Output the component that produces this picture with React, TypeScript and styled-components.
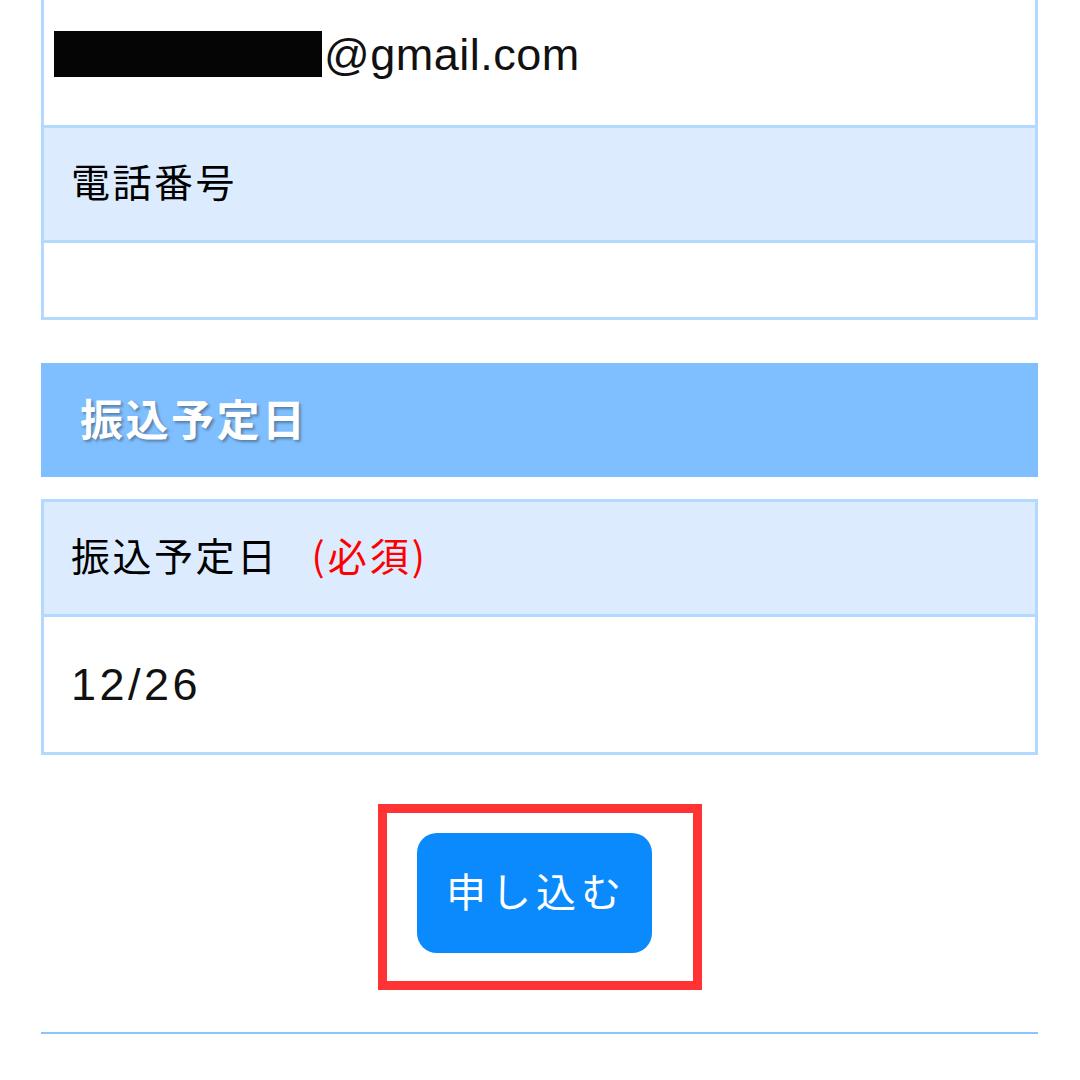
import React from "react";
import styled, { createGlobalStyle } from "styled-components";

const Global = createGlobalStyle`
  html, body { margin: 0; padding: 0; background: #ffffff; }
  body {
    font-family: "Noto Sans CJK JP", "Noto Sans", sans-serif;
    color: #000;
    overflow: hidden;
  }
`;

const Page = styled.div`
  width: 1080px;
  height: 1080px;
  box-sizing: border-box;
  padding: 0 42px 0 41px;
  display: flex;
  flex-direction: column;
  overflow: hidden;
`;

const FormTable = styled.div<{ $offset?: number; $gapTop?: number }>`
  display: flex;
  flex-direction: column;
  border: 3px solid #b3d9ff;
  margin-top: ${(p) => (p.$offset ? `${p.$offset}px` : p.$gapTop ? `${p.$gapTop}px` : "0")};
`;

const Row = styled.div<{ $label?: boolean; $h: number; $first?: boolean; $pb?: number }>`
  height: ${(p) => p.$h}px;
  box-sizing: border-box;
  display: flex;
  align-items: center;
  padding: 0 0 ${(p) => (p.$pb ?? 8)}px 27px;
  background: ${(p) => (p.$label ? "#dcecfe" : "#ffffff")};
  border-top: ${(p) => (p.$first ? "none" : "3px solid #b3d9ff")};
  font-size: 39px;
  letter-spacing: 2.5px;
  line-height: 1;
`;

const LatinValue = styled.span<{ $spacing: number }>`
  font-family: "Liberation Sans", Arial, sans-serif;
  font-size: 45px;
  letter-spacing: ${(p) => p.$spacing}px;
  color: #111;
  line-height: 1;
  display: inline-flex;
  align-items: center;
`;

const Redacted = styled.span`
  display: inline-block;
  width: 268px;
  height: 46px;
  background: #050505;
  margin-left: -17px;
  margin-right: 2px;
`;

const Required = styled.span`
  color: #ff0000;
  margin-left: 33px;
  letter-spacing: 3px;
`;

const SectionHeader = styled.div`
  margin-top: 43px;
  height: 114px;
  box-sizing: border-box;
  background: #80bfff;
  display: flex;
  align-items: center;
  padding: 0 0 6px 39px;
  color: #ffffff;
  font-weight: 700;
  font-size: 43px;
  letter-spacing: 2.5px;
  line-height: 1;
  text-shadow: 2px 2px 3px rgba(0, 0, 0, 0.35);
`;

const ButtonArea = styled.div`
  margin-top: 49px;
  display: flex;
  justify-content: center;
`;

const Highlight = styled.div`
  border: 9px solid #ff3333;
  padding: 20px 41px 28px 30px;
`;

const SubmitButton = styled.button`
  width: 235px;
  height: 120px;
  border: none;
  border-radius: 20px;
  background: #0a8afc;
  color: #ffffff;
  font-family: "Noto Sans CJK JP", "Noto Sans", sans-serif;
  font-size: 40px;
  line-height: 1;
  letter-spacing: 5px;
  padding: 0 0 6px 4px;
  cursor: pointer;
`;

const Divider = styled.div`
  margin-top: 42px;
  height: 2px;
  background: #8cc4ff;
`;

export default function App() {
  return (
    <>
      <Global />
      <Page>
        <FormTable $offset={-16}>
          <Row $h={138} $first $pb={4}>
            <Redacted />
            <LatinValue $spacing={0.5}>@gmail.com</LatinValue>
          </Row>
          <Row $label $h={115}>電話番号</Row>
          <Row $h={77}></Row>
        </FormTable>

        <SectionHeader>振込予定日</SectionHeader>

        <FormTable $gapTop={22}>
          <Row $label $h={112} $first>
            振込予定日<Required>(必須)</Required>
          </Row>
          <Row $h={138} $pb={0}>
            <LatinValue $spacing={3.5}>12/26</LatinValue>
          </Row>
        </FormTable>

        <ButtonArea>
          <Highlight>
            <SubmitButton>申し込む</SubmitButton>
          </Highlight>
        </ButtonArea>

        <Divider />
      </Page>
    </>
  );
}
